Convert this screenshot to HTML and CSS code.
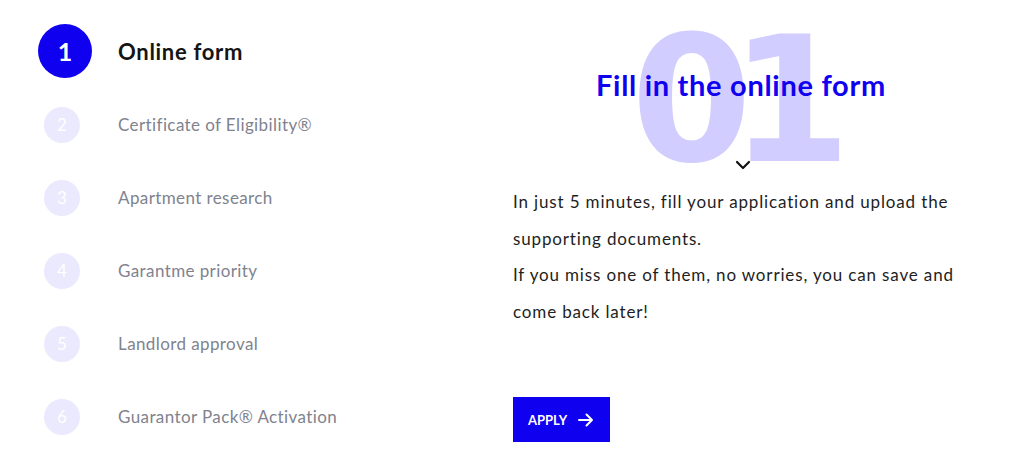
FILE: index.html
```html
<!DOCTYPE html>
<html lang="en">
<head>
<meta charset="utf-8">
<title>Steps</title>
<link rel="stylesheet" href="styles.css">
</head>
<body>
<div class="page">
  <ol class="steps">
    <li class="step active"><span class="dot">1</span><span class="label">Online form</span></li>
    <li class="step"><span class="dot">2</span><span class="label">Certificate of Eligibility®</span></li>
    <li class="step"><span class="dot">3</span><span class="label">Apartment research</span></li>
    <li class="step"><span class="dot">4</span><span class="label">Garantme priority</span></li>
    <li class="step"><span class="dot">5</span><span class="label">Landlord approval</span></li>
    <li class="step"><span class="dot">6</span><span class="label">Guarantor Pack® Activation</span></li>
  </ol>
  <section class="detail">
    <div class="hero">
      <span class="bignum" aria-hidden="true">01</span>
      <h2 class="title">Fill in the online form</h2>
      <svg class="chev" width="16" height="10" viewBox="0 0 16 10"><path d="M2 2 L8 8 L14 2" fill="none" stroke="#111" stroke-width="2.2" stroke-linecap="round" stroke-linejoin="round"/></svg>
    </div>
    <p class="text">In just 5 minutes, fill your application and upload the supporting documents.<br>If you miss one of them, no worries, you can save and come back later!</p>
    <a class="btn" href="#">APPLY
      <svg width="16" height="14" viewBox="0 0 16 14"><path d="M1 7 H14 M8.5 1.5 L14 7 L8.5 12.5" fill="none" stroke="#fff" stroke-width="2" stroke-linecap="round" stroke-linejoin="round"/></svg>
    </a>
  </section>
</div>
</body>
</html>
```
FILE: styles.css
```css
* { box-sizing: border-box; }
body {
  margin: 0;
  background: #fff;
  font-family: Lato, "Noto Sans", Arial, sans-serif;
  color: #1a1a1a;
}
.page {
  display: flex;
  width: 1024px;
  height: 473px;
  overflow: hidden;
}
.steps {
  list-style: none;
  margin: 0;
  padding: 14px 0 0 38px;
  width: 475px;
}
.step {
  display: grid;
  grid-template-columns: 80px 1fr;
  align-items: center;
  height: 73px;
}
.step.active { height: 74px; }
.dot {
  width: 36px;
  height: 36px;
  margin-left: 6px;
  border-radius: 50%;
  background: #ebe9fd;
  color: #fff;
  font-size: 17px;
  display: flex;
  align-items: center;
  justify-content: center;
}
.active .dot {
  width: 54px;
  height: 54px;
  margin-left: 0;
  background: #1000f0;
  font-size: 25px;
  font-weight: 700;
}
.label {
  font-size: 17px;
  color: #80838e;
  letter-spacing: 0.4px;
}
.active .label {
  font-size: 22px;
  color: #151515;
  font-weight: 700;
  letter-spacing: 0.7px;
}
.detail {
  width: 456px;
  margin-left: 38px;
}
.hero {
  position: relative;
  height: 181px;
  display: flex;
  flex-direction: column;
  align-items: center;
}
.bignum {
  position: absolute;
  left: 0;
  right: 0;
  top: 14px;
  text-align: center;
  font-family: "DejaVu Sans", sans-serif;
  font-size: 174px;
  font-weight: 700;
  line-height: 1;
  color: #d1cdfe;
  letter-spacing: -22px;
  padding-right: 22px;
}
.title {
  position: relative;
  margin: 66px 0 0;
  font-size: 29px;
  font-weight: 700;
  color: #1000f0;
  line-height: 38px;
  letter-spacing: 0.7px;
}
.chev {
  position: relative;
  margin-top: 56px;
  margin-left: 4px;
}
.text {
  margin: 3px 0 0;
  font-size: 17px;
  line-height: 36.6px;
  letter-spacing: 0.85px;
  color: #1e1e1e;
}
.btn {
  display: inline-flex;
  align-items: center;
  gap: 11px;
  margin-top: 67px;
  height: 45px;
  padding: 0 16px 0 15px;
  background: #1000f0;
  color: #fff;
  font-size: 13px;
  font-weight: 700;
  text-decoration: none;
}
```
